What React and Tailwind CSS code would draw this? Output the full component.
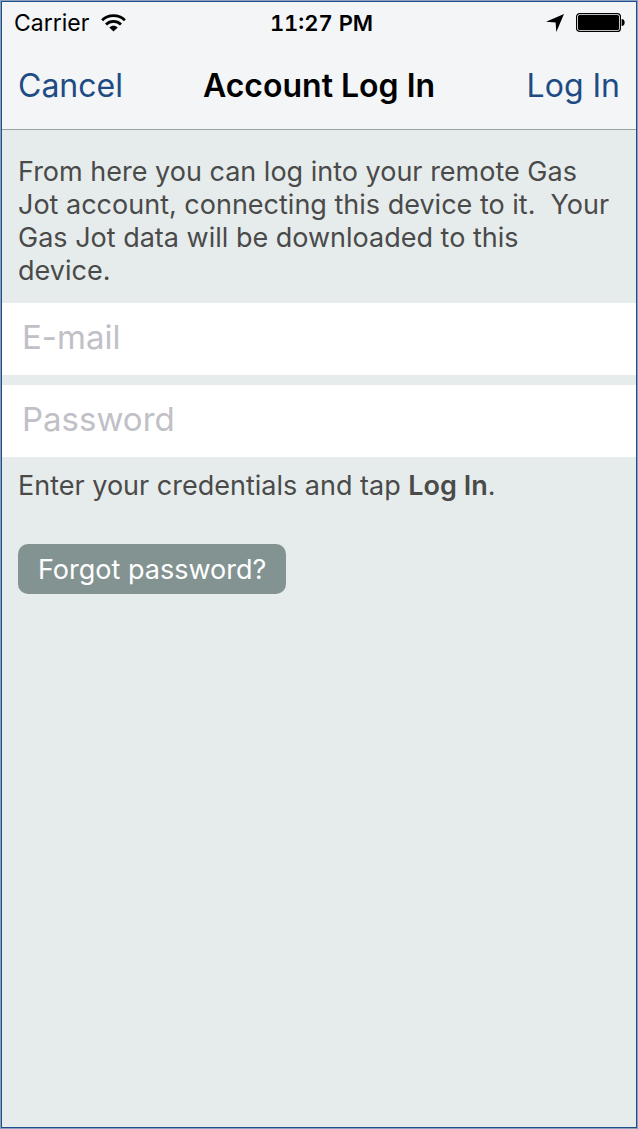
import React from "react";

function WifiIcon() {
  return (
    <svg width="25" height="18" viewBox="0 0 25 18" aria-hidden="true">
      <g fill="none" stroke="#000" strokeWidth="2.8">
        <path d="M1.1 6.2C7.4 .2 17.6 .2 23.9 6.2" />
        <path d="M5 10.4C9.2 6.4 15.8 6.4 20 10.4" />
      </g>
      <path d="M8.3 13.4C10.7 11.2 14.3 11.2 16.7 13.4L12.5 17.6Z" />
    </svg>
  );
}

function LocationIcon() {
  return (
    <svg width="18" height="18" viewBox="0 0 18 18" aria-hidden="true">
      <path d="M18 0L10.3 18L9.6 8.5L0 7.8Z" />
    </svg>
  );
}

function BatteryIcon() {
  return (
    <svg width="49" height="19" viewBox="0 0 49 19" aria-hidden="true">
      <rect x=".6" y=".6" width="43.8" height="17.8" rx="3" fill="#fff" stroke="#000" strokeWidth="1.2" />
      <rect x="2" y="2" width="41" height="15" rx="1.6" />
      <path d="M45.6 6C47.6 6 48.6 7.5 48.6 9.5S47.6 13 45.6 13Z" />
    </svg>
  );
}

function StatusBar() {
  return (
    <div className="grid h-[41px] grid-cols-[1fr_auto_1fr] items-center pr-[11px] pl-3 text-[23px] leading-7 text-black">
      <div className="flex items-center gap-3">
        <span>Carrier</span>
        <WifiIcon />
      </div>
      <span className="pl-1 text-[22px] font-semibold tabular-nums">11:27 PM</span>
      <div className="flex items-center justify-end gap-3">
        <LocationIcon />
        <BatteryIcon />
      </div>
    </div>
  );
}

function Field({ label, type, autoComplete }) {
  return (
    <input
      type={type}
      aria-label={label}
      placeholder={label}
      autoComplete={autoComplete}
      className="block h-[72px] w-full bg-white px-5 pb-1 text-[33px] text-black outline-none placeholder:text-[#c0c0c7] placeholder:opacity-100"
    />
  );
}

export default function App() {
  return (
    <div className="min-h-screen border border-[#8c9fbd] bg-[#e6eceb] font-[Inter,'Liberation_Sans',sans-serif]">
      <div className="flex min-h-[calc(100vh-2px)] flex-col border border-[#1f4e8c]">
        <header className="border-b border-[#9ba2a5] bg-[#f3f5f6]">
          <StatusBar />
          <nav className="grid h-[86px] grid-cols-[1fr_auto_1fr] items-center px-4 text-[32px] leading-10">
            <button type="button" className="justify-self-start text-[#1f4b85]">
              Cancel
            </button>
            <h1 className="font-semibold text-black">Account Log In</h1>
            <button type="submit" form="login" className="justify-self-end text-[#1f4b85]">
              Log In
            </button>
          </nav>
        </header>
        <form id="login" onSubmit={(e) => e.preventDefault()}>
          <p className="pt-[25px] pr-6 pb-4 pl-4 text-[27px] leading-[33px] text-[#4a4a4a]">
            From here you can log into your remote Gas Jot account, connecting this device to it.&nbsp; Your Gas Jot
            data will be downloaded to this device.
          </p>
          <div className="flex flex-col gap-[10px]">
            <Field label="E-mail" type="email" autoComplete="email" />
            <Field label="Password" type="password" autoComplete="current-password" />
          </div>
          <p className="px-4 pt-3 text-[27px] leading-[33px] text-[#4a4a4a]">
            Enter your credentials and tap <b className="font-semibold">Log In</b>.
          </p>
          <button
            type="button"
            className="mt-[42px] ml-4 h-[50px] rounded-[10px] bg-[#839391] px-5 text-[27px] leading-[33px] text-white"
          >
            Forgot password?
          </button>
        </form>
      </div>
    </div>
  );
}
